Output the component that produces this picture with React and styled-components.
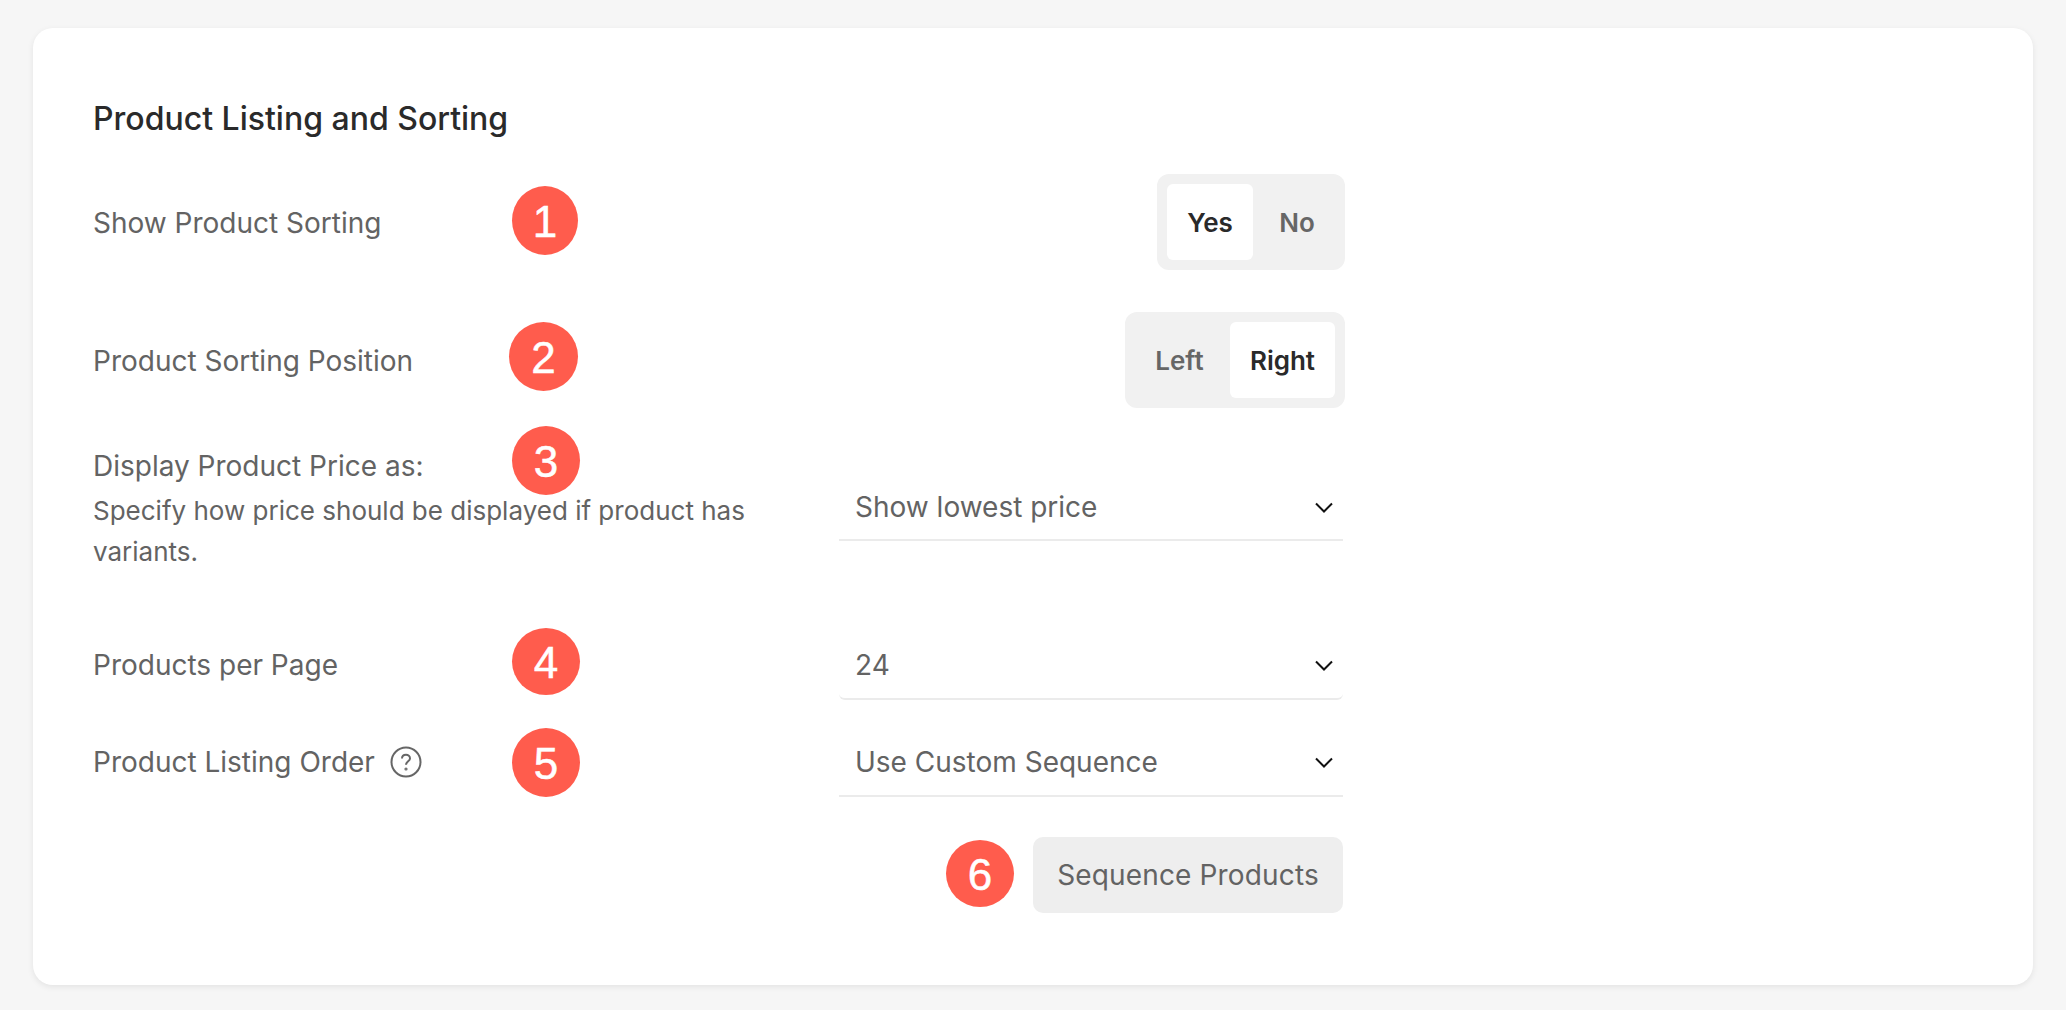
import React from "react";
import styled, { createGlobalStyle } from "styled-components";

const GlobalStyle = createGlobalStyle`
  html, body {
    margin: 0;
    padding: 0;
    background: #f6f6f6;
    font-family: "Inter", "Liberation Sans", sans-serif;
  }
`;

const Page = styled.div`
  box-sizing: border-box;
  width: 2066px;
  height: 1010px;
  padding: 28px 33px 25px;
`;

const Card = styled.section`
  box-sizing: border-box;
  width: 2000px;
  height: 957px;
  padding: 69px 60px 0;
  background: #fff;
  border-radius: 20px;
  box-shadow: 0 2px 6px rgba(0, 0, 0, 0.08);
`;

const Title = styled.h2`
  margin: 0 0 33px;
  font-size: 32px;
  line-height: 44px;
  font-weight: 500;
  color: #2a2a2a;
`;

const Form = styled.div`
  width: 1252px;
  display: flex;
  flex-direction: column;
`;

const Row = styled.div`
  position: relative;
  display: flex;
  justify-content: space-between;
  align-items: ${(p) => p.$align || "center"};
  height: ${(p) => p.$height}px;
  margin-bottom: ${(p) => p.$after || 0}px;
`;

const Label = styled.div`
  padding-top: 2px;
  font-size: 28px;
  line-height: 40px;
  color: #636363;
  display: flex;
  align-items: center;
  gap: 15px;
`;

const LabelStack = styled.div`
  width: 680px;
  margin-top: -3px;
`;

const Hint = styled.p`
  margin: 4px 0 0;
  font-size: 26px;
  line-height: 41px;
  color: #636363;
`;

const Toggle = styled.div`
  box-sizing: border-box;
  display: flex;
  height: 96px;
  padding: 10px;
  background: #f1f1f1;
  border-radius: 12px;
`;

const ToggleOption = styled.div`
  box-sizing: border-box;
  display: flex;
  align-items: center;
  justify-content: center;
  width: ${(p) => p.$width}px;
  padding: ${(p) => p.$pad || "0"};
  border-radius: 6px;
  font-size: 26px;
  font-weight: 600;
  background: ${(p) => (p.$active ? "#fff" : "transparent")};
  color: ${(p) => (p.$active ? "#2a2a2a" : "#666")};
`;

const Select = styled.div`
  box-sizing: border-box;
  display: flex;
  align-items: center;
  justify-content: space-between;
  width: 504px;
  height: 72px;
  margin-top: ${(p) => p.$top || 0}px;
  margin-right: 2px;
  padding: ${(p) => p.$pad || 6}px 10px 0 16px;
  border-bottom: 2px solid #ebebeb;
  border-radius: ${(p) => (p.$rounded ? "0 0 6px 6px" : "0")};
  font-size: 28px;
  color: #636363;
`;

const Chevron = styled.svg`
  width: 18px;
  height: 11px;
  fill: none;
  stroke: #111;
  stroke-width: 2;
`;

const HelpIcon = styled.svg`
  width: 32px;
  height: 32px;
  fill: none;
  stroke: #666;
  stroke-width: 2;
`;

const SequenceButton = styled.button`
  width: 310px;
  height: 76px;
  margin-right: 2px;
  padding: 0;
  border: 0;
  border-radius: 10px;
  background: #eee;
  font-family: inherit;
  font-size: 28px;
  letter-spacing: 0.15px;
  color: #636363;
`;

// numbered callouts sit over the form, so they are placed by offset
const Badge = styled.span`
  position: absolute;
  box-sizing: border-box;
  left: ${(p) => p.$left}px;
  top: ${(p) => p.$top}px;
  width: ${(p) => p.$width || 68}px;
  height: ${(p) => p.$height || 69}px;
  padding-top: 2px;
  display: flex;
  align-items: center;
  justify-content: center;
  border-radius: 50%;
  background: #ff5c4d;
  color: #fff;
  font-family: "Liberation Sans", Arial, sans-serif;
  font-size: 44px;
  -webkit-text-stroke: 0.5px #fff;
`;

const ChevronDown = () => (
  <Chevron viewBox="0 0 18 11">
    <path d="M1 1.5 L9 9.5 L17 1.5" />
  </Chevron>
);

const Help = () => (
  <HelpIcon viewBox="0 0 32 32">
    <circle cx="16" cy="16" r="14.5" />
    <path d="M12 12.5 C12 10 14 8.8 16 8.8 C18.2 8.8 20 10.4 20 12.4 C20 15 16 15.6 16 18.8" />
    <circle cx="16" cy="23" r="0.6" />
  </HelpIcon>
);

export default function App() {
  return (
    <Page>
      <GlobalStyle />
      <Card>
        <Title>Product Listing and Sorting</Title>
        <Form>
          <Row $height={96} $after={42}>
            <Label>Show Product Sorting</Label>
            <Badge $left={419} $top={12} $width={66}>1</Badge>
            <Toggle>
              <ToggleOption $width={86} $active>Yes</ToggleOption>
              <ToggleOption $width={82} $pad="0 0 0 6px">No</ToggleOption>
            </Toggle>
          </Row>
          <Row $height={96} $after={39}>
            <Label>Product Sorting Position</Label>
            <Badge $left={416} $top={10} $width={69}>2</Badge>
            <Toggle>
              <ToggleOption $width={95} $pad="0 6px 0 0">Left</ToggleOption>
              <ToggleOption $width={105} $active>Right</ToggleOption>
            </Toggle>
          </Row>
          <Row $height={181} $align="flex-start">
            <LabelStack>
              <Label>Display Product Price as:</Label>
              <Hint>Specify how price should be displayed if product has variants.</Hint>
            </LabelStack>
            <Badge $left={419} $top={-21}>3</Badge>
            <Select $top={22}>
              Show lowest price
              <ChevronDown />
            </Select>
          </Row>
          <Row $height={72} $after={25}>
            <Label>Products per Page</Label>
            <Badge $left={419} $top={0} $height={67}>4</Badge>
            <Select $rounded $pad={4}>
              24
              <ChevronDown />
            </Select>
          </Row>
          <Row $height={72} $after={40}>
            <Label>
              Product Listing Order
              <Help />
            </Label>
            <Badge $left={419} $top={3}>5</Badge>
            <Select $pad={4}>
              Use Custom Sequence
              <ChevronDown />
            </Select>
          </Row>
          <Row $height={76} $align="flex-start">
            <span />
            <Badge $left={853} $top={3} $height={67}>6</Badge>
            <SequenceButton>Sequence Products</SequenceButton>
          </Row>
        </Form>
      </Card>
    </Page>
  );
}
